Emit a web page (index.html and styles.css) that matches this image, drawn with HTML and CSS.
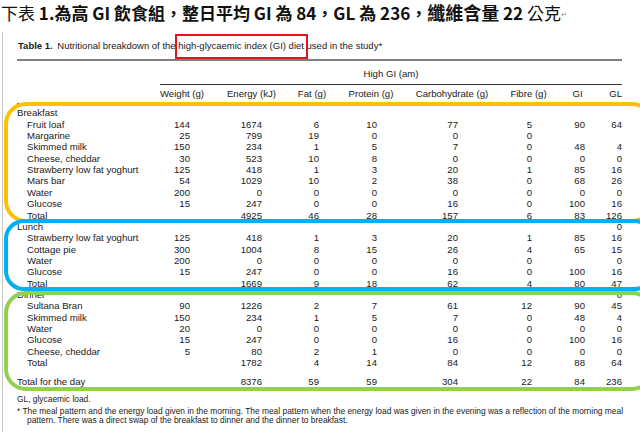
FILE: index.html
```html
<!DOCTYPE html>
<html lang="zh-Hant">
<head>
<meta charset="utf-8">
<title>Table 1</title>
<link rel="stylesheet" href="styles.css">
</head>
<body>
<h1 class="title"><span class="reg">下表</span> 1.為高 GI 飲食組，整日平均 GI 為 84，GL 為 236，<span class="fiber">纖維含量</span> 22 <span class="reg">公克</span><span class="pmark">↵</span></h1>
<div class="frame">
  <p class="caption"><b>Table 1.</b> Nutritional breakdown of the <span class="hl">high-glycaemic index (GI) diet</span> used in the study*</p>
  <div class="rule-thick"></div>
  <div class="group">High GI (am)</div>
  <div class="rule-group"></div>
  <div class="row head">
    <span></span><span>Weight (g)</span><span>Energy (kJ)</span><span>Fat (g)</span><span>Protein (g)</span><span>Carbohydrate (g)</span><span>Fibre (g)</span><span>GI</span><span>GL</span>
  </div>
  <div class="rule-head"></div>
  <div class="tbody">
    <div class="section">
      <div class="row sec"><span>Breakfast</span><span></span><span></span><span></span><span></span><span></span><span></span><span></span><span></span></div>
      <div class="row"><span>Fruit loaf</span><span>144</span><span>1674</span><span>6</span><span>10</span><span>77</span><span>5</span><span>90</span><span>64</span></div>
      <div class="row"><span>Margarine</span><span>25</span><span>799</span><span>19</span><span>0</span><span>0</span><span>0</span><span></span><span></span></div>
      <div class="row"><span>Skimmed milk</span><span>150</span><span>234</span><span>1</span><span>5</span><span>7</span><span>0</span><span>48</span><span>4</span></div>
      <div class="row"><span>Cheese, cheddar</span><span>30</span><span>523</span><span>10</span><span>8</span><span>0</span><span>0</span><span>0</span><span>0</span></div>
      <div class="row"><span>Strawberry low fat yoghurt</span><span>125</span><span>418</span><span>1</span><span>3</span><span>20</span><span>1</span><span>85</span><span>16</span></div>
      <div class="row"><span>Mars bar</span><span>54</span><span>1029</span><span>10</span><span>2</span><span>38</span><span>0</span><span>68</span><span>26</span></div>
      <div class="row"><span>Water</span><span>200</span><span>0</span><span>0</span><span>0</span><span>0</span><span>0</span><span>0</span><span>0</span></div>
      <div class="row"><span>Glucose</span><span>15</span><span>247</span><span>0</span><span>0</span><span>16</span><span>0</span><span>100</span><span>16</span></div>
      <div class="row"><span>Total</span><span></span><span>4925</span><span>46</span><span>28</span><span>157</span><span>6</span><span>83</span><span>126</span></div>
      <div class="ring ring-breakfast"></div>
    </div>
    <div class="section">
      <div class="row sec"><span>Lunch</span><span></span><span></span><span></span><span></span><span></span><span></span><span></span><span>0</span></div>
      <div class="row"><span>Strawberry low fat yoghurt</span><span>125</span><span>418</span><span>1</span><span>3</span><span>20</span><span>1</span><span>85</span><span>16</span></div>
      <div class="row"><span>Cottage pie</span><span>300</span><span>1004</span><span>8</span><span>15</span><span>26</span><span>4</span><span>65</span><span>15</span></div>
      <div class="row"><span>Water</span><span>200</span><span>0</span><span>0</span><span>0</span><span>0</span><span>0</span><span></span><span>0</span></div>
      <div class="row"><span>Glucose</span><span>15</span><span>247</span><span>0</span><span>0</span><span>16</span><span>0</span><span>100</span><span>16</span></div>
      <div class="row"><span>Total</span><span></span><span>1669</span><span>9</span><span>18</span><span>62</span><span>4</span><span>80</span><span>47</span></div>
      <div class="ring ring-lunch"></div>
    </div>
    <div class="section">
      <div class="row sec"><span>Dinner</span><span></span><span></span><span></span><span></span><span></span><span></span><span></span><span>0</span></div>
      <div class="row"><span>Sultana Bran</span><span>90</span><span>1226</span><span>2</span><span>7</span><span>61</span><span>12</span><span>90</span><span>45</span></div>
      <div class="row"><span>Skimmed milk</span><span>150</span><span>234</span><span>1</span><span>5</span><span>7</span><span>0</span><span>48</span><span>4</span></div>
      <div class="row"><span>Water</span><span>20</span><span>0</span><span>0</span><span>0</span><span>0</span><span>0</span><span>0</span><span>0</span></div>
      <div class="row"><span>Glucose</span><span>15</span><span>247</span><span>0</span><span>0</span><span>16</span><span>0</span><span>100</span><span>16</span></div>
      <div class="row"><span>Cheese, cheddar</span><span>5</span><span>80</span><span>2</span><span>1</span><span>0</span><span>0</span><span>0</span><span>0</span></div>
      <div class="row"><span>Total</span><span></span><span>1782</span><span>4</span><span>14</span><span>84</span><span>12</span><span>88</span><span>64</span></div>
      <div class="row sec day"><span>Total for the day</span><span></span><span>8376</span><span>59</span><span>59</span><span>304</span><span>22</span><span>84</span><span>236</span></div>
      <div class="ring ring-dinner"></div>
    </div>
  </div>
  <div class="notes">
    <p class="note-gl">GL, glycaemic load.</p>
    <p class="note-1">* The meal pattern and the energy load given in the morning. The meal pattern when the energy load was given in the evening was a reflection of the morning meal</p>
    <p class="note-2">pattern. There was a direct swap of the breakfast to dinner and the dinner to breakfast.</p>
  </div>
</div>
</body>
</html>
```

FILE: styles.css
```css
* { box-sizing: border-box; margin: 0; padding: 0; }
html, body { background: #fff; }
body {
  width: 640px;
  height: 432px;
  overflow: hidden;
  font-family: "Liberation Sans", Arial, sans-serif;
  color: #1a1a1a;
}

.title {
  font-family: "Noto Sans CJK TC", "Noto Sans CJK SC", sans-serif;
  font-size: 17px;
  font-weight: 700;
  line-height: 24px;
  height: 32px;
  padding-left: 1px;
  color: #111;
  white-space: nowrap;
}
.title .reg { font-weight: 400; }
.title .fiber { font-weight: 700; font-size: 18px; }
.pmark { font-size: 7px; font-weight: 400; color: #888; vertical-align: 3px; }

.frame {
  margin-left: 2px;
  border-left: 1px solid #c8c8c8;
  padding-left: 14px;
  height: 400px;
}

.caption {
  font-size: 9.5px;
  line-height: 12px;
  padding-top: 8px;
  padding-left: 1px;
  white-space: nowrap;
}
.caption b { font-weight: 700; margin-right: 2px; }
.hl { position: relative; }
.hl::after {
  content: "";
  position: absolute;
  left: -3px;
  right: -4px;
  top: -6px;
  bottom: -8px;
  border: 2px solid #e3141b;
}

.rule-thick {
  width: 605px;
  margin-top: 7px;
  border-top: 2px solid #808080;
}
.group {
  margin-top: 7px;
  margin-left: 143px;
  width: 462px;
  text-align: center;
  font-size: 9.6px;
  line-height: 12px;
}
.rule-group {
  margin-top: 4px;
  margin-left: 143px;
  width: 462px;
  border-top: 1px solid #333;
}
.rule-head {
  margin-top: 3px;
  width: 605px;
  border-top: 1px solid #333;
}

.row {
  display: grid;
  grid-template-columns: 138px 54px 85px 36px 82px 80px 73px 25px 32px;
  width: 605px;
  font-size: 9.6px;
  line-height: 11.36px;
  white-space: nowrap;
}
.row > span { text-align: right; }
.row > span:first-child { text-align: left; padding-left: 10px; }
.row.sec > span:first-child { padding-left: 0; }
.row > span:nth-child(2) { padding-right: 19px; }
.row > span:nth-child(3) { padding-right: 32px; }
.row > span:nth-child(4) { padding-right: 11px; }
.row > span:nth-child(5) { padding-right: 35px; }
.row > span:nth-child(6) { padding-right: 34px; }
.row > span:nth-child(7) { padding-right: 33px; }
.row > span:nth-child(8) { padding-right: 5px; }
.row > span:nth-child(9) { padding-right: 0; }

.row.head { margin-top: 3px; line-height: 12px; }
.row.head > span { text-align: center; padding-right: 0; }
.row.head > span:last-child { text-align: right; }

.tbody { padding-top: 3.3px; }
.section { position: relative; }
.row.day { margin-top: 7.7px; }

.ring {
  position: absolute;
  left: -13px;
  right: -14px;
  border: 4px solid;
  border-radius: 22px;
}
.ring-breakfast { top: -5.3px; bottom: -2px; border-color: #ffc000; }
.ring-lunch { top: -2px; bottom: -2px; border-color: #00b0f0; border-radius: 20px; }
.ring-dinner { top: 1.9px; bottom: -3.3px; border-color: #92d050; }

.notes { font-size: 8.4px; width: 606px; }
.note-gl { margin-top: 6.6px; line-height: 10px; }
.note-1 {
  margin-top: 2.9px;
  line-height: 9px;
  text-align: justify;
  text-align-last: justify;
  white-space: nowrap;
}
.note-2 { line-height: 9px; padding-left: 10px; white-space: nowrap; }
```
